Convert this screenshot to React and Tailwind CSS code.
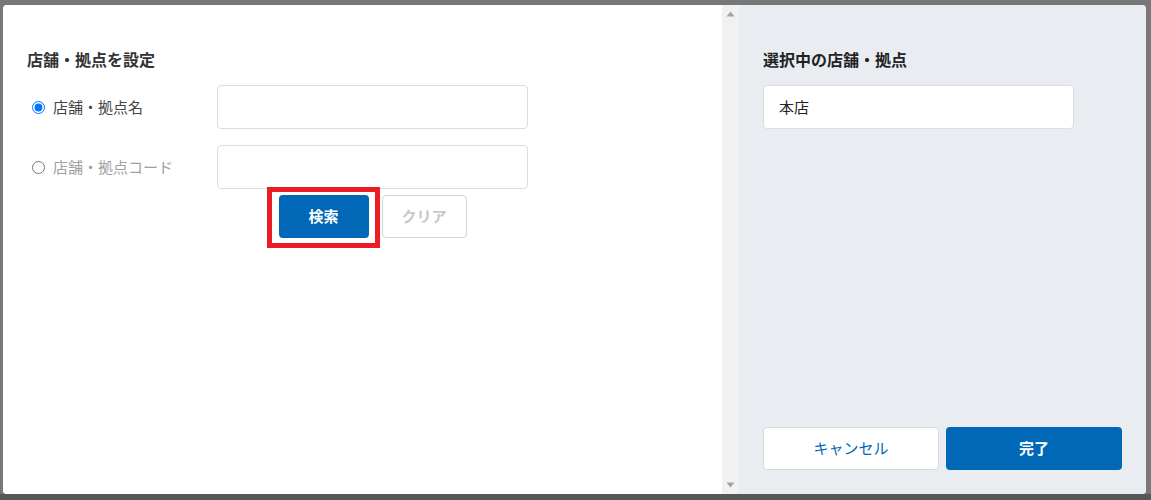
import React, { useState } from 'react';

const font = { fontFamily: '"Noto Sans CJK JP", "Noto Sans", sans-serif' };

function ScrollTrack() {
  return (
    <div className="w-[17px] shrink-0 bg-[#f1f1f1] flex flex-col items-center justify-between py-[6px]">
      <svg width="9" height="6" viewBox="0 0 9 6">
        <path d="M4.5 0.5 L8.5 5.5 L0.5 5.5 Z" fill="#a3a3a3" />
      </svg>
      <svg width="9" height="6" viewBox="0 0 9 6">
        <path d="M0.5 0.5 L8.5 0.5 L4.5 5.5 Z" fill="#a3a3a3" />
      </svg>
    </div>
  );
}

export default function App() {
  const [mode, setMode] = useState('name');

  return (
    <div
      className="w-[1151px] h-[500px] overflow-hidden bg-[linear-gradient(#787878_494px,#575757_494px)] pt-[5px] pl-[3px]"
      style={font}
    >
      <div className="w-[1143px] h-[489px] flex rounded-[4px] overflow-hidden bg-white">
        {/* left: search */}
        <div className="w-[719px] shrink-0 bg-white pl-[24px] pt-[43px]">
          <h2 className="text-[16px] leading-[22px] font-bold text-[#333]">店舗・拠点を設定</h2>

          <div className="mt-[15px] flex flex-col gap-[16px]">
            <div className="flex items-center">
              <label className="w-[190px] flex items-center gap-[8px] pl-[5px] text-[15px] text-[#444] cursor-pointer">
                <input
                  type="radio"
                  name="mode"
                  checked={mode === 'name'}
                  onChange={() => setMode('name')}
                  className="m-0 w-[13px] h-[13px]"
                />
                店舗・拠点名
              </label>
              <input className="w-[311px] h-[44px] border border-[#dcdcdc] rounded-[4px] px-3 text-[15px] outline-none" />
            </div>

            <div className="flex items-center">
              <label className="w-[190px] flex items-center gap-[8px] pl-[5px] text-[15px] text-[#a0a0a0] cursor-pointer">
                <input
                  type="radio"
                  name="mode"
                  checked={mode === 'code'}
                  onChange={() => setMode('code')}
                  className="m-0 w-[13px] h-[13px]"
                />
                店舗・拠点コード
              </label>
              <input className="w-[311px] h-[44px] border border-[#dcdcdc] rounded-[4px] px-3 text-[15px] outline-none" />
            </div>
          </div>

          <div className="ml-[190px] w-[311px] mt-[6px] flex justify-center gap-[13px]">
            <div className="relative">
              <button className="w-[90px] h-[43px] rounded-[4px] bg-[#0068b7] text-white text-[15px] font-bold">
                検索
              </button>
              <span className="absolute -left-[12px] -top-[8px] -right-[11px] -bottom-[10px] border-[5px] border-[#ec1c24] pointer-events-none" />
            </div>
            <button className="w-[85px] h-[43px] rounded-[4px] border border-[#d4d4d4] bg-white text-[#c8c8c8] text-[15px] font-bold">
              クリア
            </button>
          </div>
        </div>

        <ScrollTrack />

        {/* right: selection */}
        <div className="flex-1 bg-[#e9edf2] px-[24px] pt-[43px] pb-[24px] flex flex-col">
          <h2 className="text-[16px] leading-[22px] font-bold text-[#222]">選択中の店舗・拠点</h2>
          <div className="mt-[15px] w-[311px] h-[44px] bg-white border border-[#dcdde2] rounded-[4px] flex items-center px-[15px] text-[15px] text-[#222]">
            本店
          </div>
          <div className="mt-auto grid grid-cols-2 gap-[7px] w-[359px]">
            <button className="h-[43px] rounded-[4px] bg-white border border-[#d6d9de] text-[#0068b7] text-[15px]">
              キャンセル
            </button>
            <button className="h-[43px] rounded-[4px] bg-[#0068b7] text-white text-[15px] font-bold">
              完了
            </button>
          </div>
        </div>
      </div>
    </div>
  );
}
